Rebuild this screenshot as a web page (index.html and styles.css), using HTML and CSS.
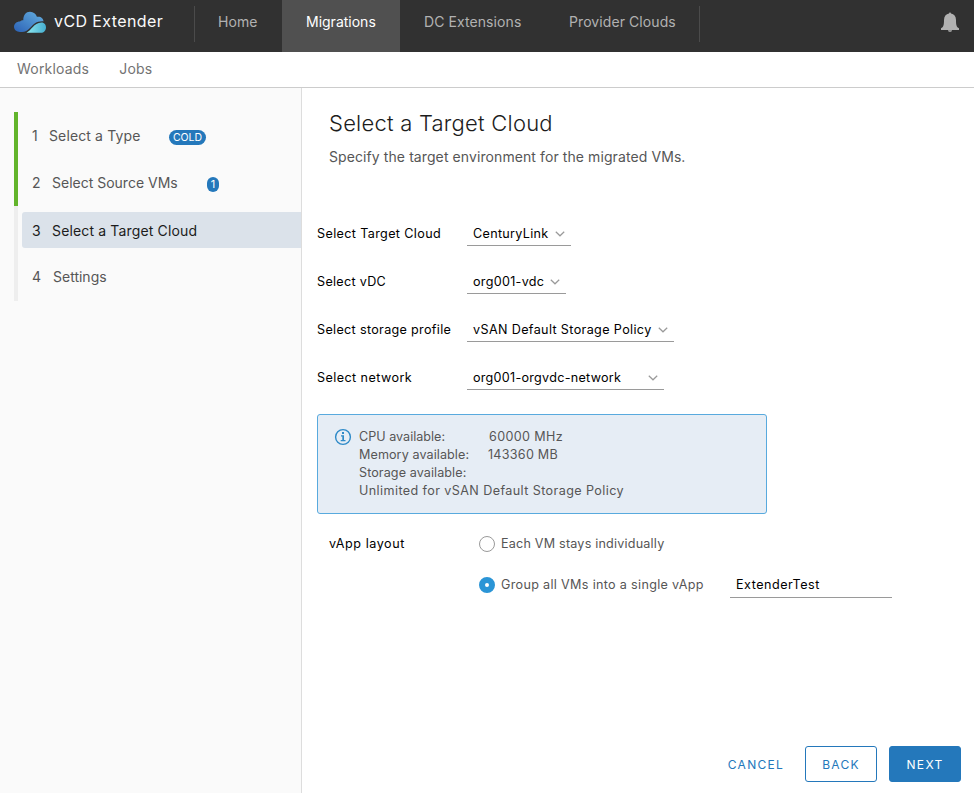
FILE: index.html
```html
<!DOCTYPE html>
<html lang="en">
<head>
<meta charset="utf-8">
<title>vCD Extender</title>
<link rel="stylesheet" href="styles.css">
</head>
<body>
<div class="app">
  <header class="header">
    <div class="brand">
      <svg class="logo" width="33" height="22" viewBox="0 0 33 22">
        <defs>
          <linearGradient id="cloud" x1="0" y1="1" x2="1" y2="0"><stop offset="0" stop-color="#2b61b5"/><stop offset="1" stop-color="#65b0e0"/></linearGradient>
          <linearGradient id="wave" x1="0" y1="0" x2="1" y2="0"><stop offset="0" stop-color="#8ee8f0"/><stop offset="1" stop-color="#45aed0"/></linearGradient>
        </defs>
        <path fill="url(#cloud)" d="M6 21C2.600 21 0 18.600 0 15.800C0 12.500 3 10.300 6 10.400C7 9.500 8.500 9 9.300 9.200C9.200 4 12 .8 16 .8C19.500.8 22 3 22.900 5.800C26.500 5 29.500 7.300 29.500 10.400C22.500 10 20 13 16.500 16.500C13.500 19.600 11 21 8 21Z"/>
        <path fill="url(#wave)" d="M12.500 21.800C17.500 19.500 19.500 12 27.500 11.600C30.500 11.600 32 14 32 16.500C32 19.500 29.800 21.800 27 21.800Z"/>
      </svg>
      <span class="brand-name">vCD Extender</span>
    </div>
    <nav class="nav">
      <a class="nav-item home">Home</a>
      <a class="nav-item active">Migrations</a>
      <a class="nav-item dc">DC Extensions</a>
      <a class="nav-item clouds">Provider Clouds</a>
    </nav>
    <svg class="bell" width="18" height="20" viewBox="0 0 18 20"><path fill="#b1b1b1" d="M8 1.500C8 0 10 0 10 1.500C13 2 15 4.300 15 8C15 13 15.500 15 18 16.300V18H0V16.300C2.500 15 3 13 3 8C3 4.300 5 2 8 1.500ZM7 18.200H11C11 20.400 7 20.400 7 18.200Z"/></svg>
  </header>
  <nav class="subnav"><a class="workloads">Workloads</a><a class="jobs">Jobs</a></nav>
  <div class="body">
    <aside class="sidebar">
      <ol class="steps">
        <li class="step done"><div class="step-link"><span class="num">1</span><span class="t1">Select a Type</span><span class="badge cold">COLD</span></div></li>
        <li class="step done"><div class="step-link"><span class="num">2</span><span class="t2">Select Source VMs</span><span class="badge count">1</span></div></li>
        <li class="step current"><div class="step-link"><span class="num">3</span><span class="t3">Select a Target Cloud</span></div></li>
        <li class="step last"><div class="step-link"><span class="num">4</span><span class="t4">Settings</span></div></li>
      </ol>
    </aside>
    <main class="content">
      <h1 class="title">Select a Target Cloud</h1>
      <p class="subtitle">Specify the target environment for the migrated VMs.</p>
      <div class="form">
        <div class="row"><label class="label l1">Select Target Cloud</label><div class="select s1"><span>CenturyLink</span><svg class="caret" width="10" height="6" viewBox="0 0 10 6"><path d="M.8.8L5 4.800L9.200.8"/></svg></div></div>
        <div class="row"><label class="label l2">Select vDC</label><div class="select s2"><span>org001-vdc</span><svg class="caret" width="10" height="6" viewBox="0 0 10 6"><path d="M.8.8L5 4.800L9.200.8"/></svg></div></div>
        <div class="row"><label class="label l3">Select storage profile</label><div class="select s3"><span>vSAN Default Storage Policy</span><svg class="caret" width="10" height="6" viewBox="0 0 10 6"><path d="M.8.8L5 4.800L9.200.8"/></svg></div></div>
        <div class="row"><label class="label l4">Select network</label><div class="select s4"><span>org001-orgvdc-network</span><svg class="caret" width="10" height="6" viewBox="0 0 10 6"><path d="M.8.8L5 4.800L9.200.8"/></svg></div></div>
      </div>
      <div class="alert">
        <svg class="info" width="18" height="18" viewBox="0 0 18 18"><circle cx="9" cy="9" r="7.400" fill="none" stroke="#2e8ac8" stroke-width="1.400"/><path fill="#2e8ac8" d="M8 4H10V6H8ZM7 7.300H10V12H11.500V13.200H6.700V12H8.300V8.500H7Z"/></svg>
        <div class="facts">
          <div class="fact"><span class="key a1">CPU available:</span><span class="v1">60000 MHz</span></div>
          <div class="fact"><span class="key a2">Memory available:</span><span class="v2">143360 MB</span></div>
          <div class="fact a3">Storage available:</div>
          <div class="fact a4">Unlimited for vSAN Default Storage Policy</div>
        </div>
      </div>
      <div class="layout">
        <div class="layout-label">vApp layout</div>
        <div class="options">
          <label class="option"><i class="radio"></i><span class="o1">Each VM stays individually</span></label>
          <label class="option"><i class="radio checked"></i><span class="o2">Group all VMs into a single vApp</span><span class="textbox">ExtenderTest</span></label>
        </div>
      </div>
      <footer class="actions"><a class="btn cancel">CANCEL</a><a class="btn outline">BACK</a><a class="btn primary">NEXT</a></footer>
    </main>
  </div>
</div>
</body>
</html>
```
FILE: styles.css
```css
* { box-sizing: border-box; }
body { margin: 0; background: #fff; color: #565656; font-family: Inter, "Liberation Sans", sans-serif; font-size: 12.6px; font-weight: 400; }
.app { width: 974px; height: 793px; display: flex; flex-direction: column; overflow: hidden; white-space: nowrap; }

.header { height: 52px; flex: none; display: flex; background: #313131; }
.brand { width: 195px; height: 36px; margin-top: 6px; padding-top: 5px; padding-left: 14px; display: flex; align-items: flex-start; border-right: 1px solid #4b4b4b; }
.logo { flex: none; }
.brand-name { margin-left: 7px; color: #fafafa; font-size: 16px; line-height: 20px; letter-spacing: .4px; }
.nav { display: flex; }
.nav-item { height: 52px; line-height: 44px; color: #b1b1b1; font-size: 14px; letter-spacing: .08px; padding-left: 24px; }
.home { width: 87px; padding-left: 23px; }
.active { width: 118px; background: #505050; color: #fff; letter-spacing: 0; }
.dc { width: 145px; }
.clouds { width: 155px; height: 36px; margin-top: 6px; line-height: 32px; border-right: 1px solid #4b4b4b; }
.bell { margin: 12px 15px 0 auto; }

.subnav { height: 36px; flex: none; display: flex; gap: 30px; padding-left: 17px; border-bottom: 1px solid #ccc; font-size: 14px; line-height: 34px; letter-spacing: .2px; color: #737373; }

.body { flex: 1; display: flex; }
.sidebar { width: 302px; padding: 24px 0 0 14px; background: #fafafa; border-right: 1px solid #ddd; }
.steps { margin: 0; padding: 0; list-style: none; }
.step { height: 47px; padding: 6px 0 5px 4px; border-left: 4px solid #eee; font-size: 14px; }
.done { border-left-color: #62b42b; }
.last { height: 48px; }
.step-link { height: 36px; display: flex; align-items: center; padding-left: 10px; border-radius: 3px 0 0 3px; }
.done .step-link, .last .step-link { height: 34px; }
.current .step-link { background: #dbe2ea; color: #1c1c1c; }
.num { width: 20px; }
.badge { background: #2478bb; color: #fff; height: 15px; border-radius: 8px; font-size: 11px; line-height: 15px; text-align: center; margin-top: 4px; }
.cold { width: 37px; font-size: 10.5px; }
.count { width: 12px; }
.t1 { width: 120px; margin-left: -3px; letter-spacing: .13px; }
.t2 { width: 155px; }
.t3 { letter-spacing: .15px; }
.t4 { margin-left: 1px; }

.content { flex: 1; display: flex; flex-direction: column; padding: 0 13px 11px 15px; }
.title { margin: 19px 0 0 12px; font-size: 22px; line-height: 32px; font-weight: 300; letter-spacing: .23px; color: #1c1c1c; }
.subtitle { margin: 8px 0 0 12px; font-size: 14px; line-height: 20px; letter-spacing: .09px; }
.form { margin-top: 55px; color: #000; }
.row { height: 48px; display: flex; align-items: flex-start; }
.label { width: 150px; line-height: 23px; }
.l1 { letter-spacing: .36px; } .l2 { letter-spacing: .3px; } .l3 { letter-spacing: .32px; } .l4 { letter-spacing: .42px; }
.select { height: 24px; display: flex; align-items: center; justify-content: space-between; padding: 0 6px; border-bottom: 1px solid #9a9a9a; letter-spacing: .3px; }
.select span { line-height: 23px; }
.s1 { width: 104px; } .s2 { width: 99px; } .s3 { width: 207px; letter-spacing: .36px; } .s4 { width: 197px; letter-spacing: .27px; }
.caret { fill: none; stroke: #9a9a9a; stroke-width: 1.2; }

.alert { width: 450px; height: 100px; display: flex; padding: 13px 16px; border: 1px solid #58aade; border-radius: 3px; background: #e6edf5; }
.info { margin-right: 7px; }
.fact { display: flex; line-height: 18px; }
.key { width: 130px; }
.a2, .a3 { letter-spacing: .08px; }
.a4 { letter-spacing: .4px; }
.v1 { letter-spacing: .35px; }
.v2 { margin-left: -1px; letter-spacing: .25px; }

.layout { display: flex; margin: 20px 0 0 12px; }
.layout-label { width: 150px; line-height: 19px; letter-spacing: .55px; color: #000; }
.option { height: 41px; display: flex; align-items: flex-start; line-height: 19px; }
.radio { width: 16px; height: 16px; margin: 2px 6px 0 0; border: 1px solid #9a9a9a; border-radius: 50%; background: #fff; }
.checked { border: 6px solid #2b95d6; }
.o1 { letter-spacing: .2px; }
.o2 { width: 229px; letter-spacing: .32px; }
.textbox { width: 162px; height: 24px; margin-top: -1px; padding-left: 6px; line-height: 21px; letter-spacing: .5px; border-bottom: 1px solid #9a9a9a; color: #000; }

.actions { margin-top: auto; display: flex; justify-content: flex-end; gap: 12px; }
.btn { width: 72px; height: 36px; border: 1px solid #2478bb; border-radius: 3px; color: #2478bb; font-size: 12px; line-height: 36px; text-align: center; letter-spacing: 1.3px; }
.cancel { border-color: transparent; margin-right: 1px; }
.primary { background: #2478bb; color: #fff; }
```
